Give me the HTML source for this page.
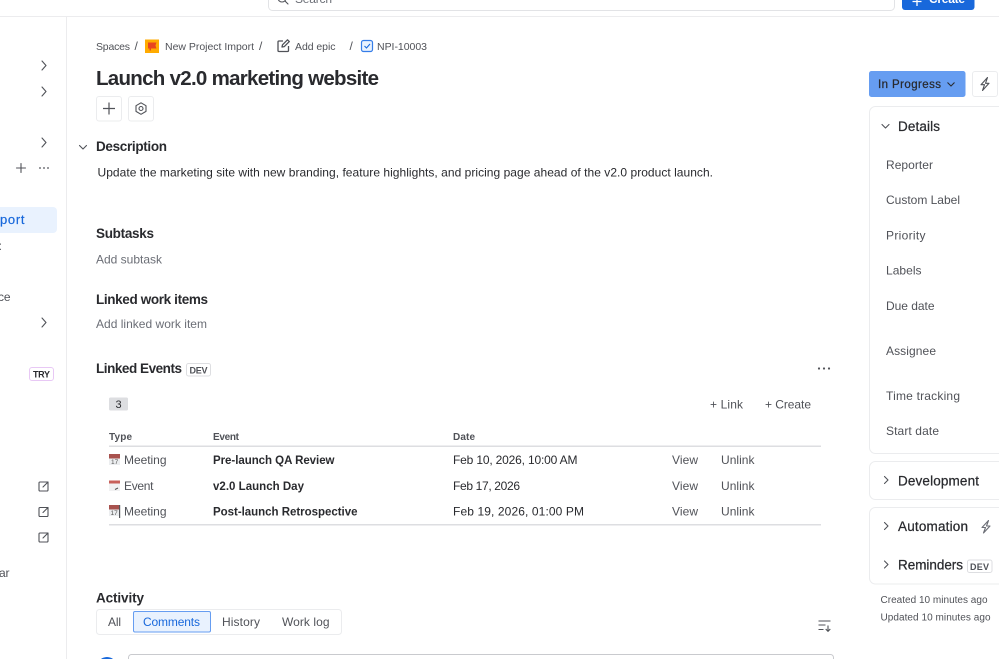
<!DOCTYPE html>
<html><head><meta charset="utf-8"><title>Launch v2.0 marketing website</title>
<style>
html,body{margin:0;padding:0;background:#fff;width:999px;height:659px;overflow:hidden}
svg{display:block;font-family:"Liberation Sans",sans-serif;filter:blur(.3px)}
.b{font-weight:700}
.m{stroke:#292a2e;stroke-width:.25}
.ic{fill:none;stroke:#505258;stroke-width:1.1;stroke-linecap:round;stroke-linejoin:round}
</style></head><body>
<svg width="999" height="659" viewBox="0 0 999 659" xmlns="http://www.w3.org/2000/svg">
<!-- top bar -->
<rect x="0" y="16" width="999" height="1" fill="#ececee"/>
<rect x="268.500" y="-10" width="626" height="20.500" rx="4" fill="#fff" stroke="#e2e3e6"/>
<circle cx="282" cy="-2" r="4" class="ic"/><path d="M285 1l3 3" class="ic"/>
<text x="295" y="3" font-size="12" fill="#6b6e76" textLength="37">Search</text>
<rect x="902" y="-10" width="72.500" height="20" rx="3" fill="#1868db"/>
<path d="M917 -3v9M912.500 1.500h9" stroke="#fff" stroke-width="1.300" fill="none"/>
<text x="929" y="3" font-size="12" fill="#fff" class="b" textLength="36">Create</text>

<!-- sidebar -->
<rect x="66" y="17" width="1" height="642" fill="#ececee"/>
<path d="M42 61l4 4.500-4 4.500M42 87l4 4.500-4 4.500M42 138l4 4.500-4 4.500M42 318l4 4.500-4 4.500" class="ic"/>
<path d="M21 163.500v9M16.500 168h9" class="ic"/>
<circle cx="40" cy="168" r=".9" fill="#505258"/><circle cx="44" cy="168" r=".9" fill="#505258"/><circle cx="48" cy="168" r=".9" fill="#505258"/>
<rect x="-8" y="207" width="65" height="26" rx="4" fill="#e9f2fe"/>
<text x="0" y="224" font-size="13" fill="#1868db" stroke="#1868db" stroke-width=".2" textLength="24.500">port</text>
<text x="-3" y="250" font-size="12" fill="#505258" textLength="5">t:</text>
<text x="-2" y="301" font-size="12" fill="#505258" textLength="12.500">ce</text>
<rect x="29.500" y="367.500" width="24" height="13" rx="2.500" fill="#fff" stroke="#e8c8f5"/>
<text x="33" y="377.500" font-size="9" fill="#292a2e" class="b" textLength="17">TRY</text>
<path d="M44 482h-4a1 1 0 0 0-1 1v7a1 1 0 0 0 1 1h7a1 1 0 0 0 1-1v-4M43 487l5-5M44.500 482h3.500v3.500" class="ic"/>
<path d="M44 507.500h-4a1 1 0 0 0-1 1v7a1 1 0 0 0 1 1h7a1 1 0 0 0 1-1v-4M43 512.500l5-5M44.500 507.500h3.500v3.500" class="ic"/>
<path d="M44 533h-4a1 1 0 0 0-1 1v7a1 1 0 0 0 1 1h7a1 1 0 0 0 1-1v-4M43 538l5-5M44.500 533h3.500v3.500" class="ic"/>
<text x="-1" y="577" font-size="12" fill="#505258" textLength="10.500">ar</text>

<!-- breadcrumbs -->
<g font-size="10.500" fill="#505258">
<text x="96" y="50" textLength="34">Spaces</text>
<text x="134.500" y="50" font-size="12">/</text>
<rect x="145" y="39.500" width="14" height="13.500" fill="#ffab00"/>
<path d="M148 42.500h8.500l-1 3 1 3H151v2h-1.500v-2H148z" fill="#e8451f"/>
<text x="165" y="50" textLength="89">New Project Import</text>
<text x="259" y="50" font-size="12">/</text>
<path d="M283 41h-4a1 1 0 0 0-1 1v8.500a1 1 0 0 0 1 1h8.500a1 1 0 0 0 1-1v-4.500M282 47l.5-2.200 5-5 1.800 1.800-5 5z" fill="none" stroke="#505258" stroke-width="1.300" stroke-linejoin="round"/>
<text x="295" y="50" textLength="40.500">Add epic</text>
<text x="349.500" y="50" font-size="12">/</text>
<rect x="361.500" y="40.500" width="11" height="11" rx="2" fill="#e9f2fe" stroke="#357de8" stroke-width="1.200"/>
<path d="M364.500 46l2 2 3.500-4" fill="none" stroke="#1868db" stroke-width="1.100"/>
<text x="377" y="50" textLength="50">NPI-10003</text>
</g>

<!-- title -->
<text x="96" y="85" font-size="20.500" class="b" fill="#292a2e" textLength="283">Launch v2.0 marketing website</text>
<rect x="96.500" y="96.500" width="25" height="24.500" rx="2.500" fill="#fff" stroke="#ebecee"/>
<path d="M109 102.500v12M103 108.500h12" fill="none" stroke="#505258" stroke-width="1.200"/>
<rect x="128.500" y="96.500" width="25" height="24.500" rx="2.500" fill="#fff" stroke="#ebecee"/>
<path d="M141 102.800l5 2.900v5.700l-5 2.900-5-2.900v-5.700z" class="ic"/><circle cx="141" cy="108.500" r="2" class="ic"/>

<!-- description -->
<path d="M79.500 145.500l3.500 3.500 3.500-3.500" class="ic"/>
<text x="96" y="151" font-size="13.500" class="b" fill="#292a2e" textLength="71">Description</text>
<text x="97.500" y="176.500" font-size="12" fill="#292a2e" textLength="615.500">Update the marketing site with new branding, feature highlights, and pricing page ahead of the v2.0 product launch.</text>

<text x="96" y="238" font-size="13.500" class="b" fill="#292a2e" textLength="58">Subtasks</text>
<text x="96" y="263.500" font-size="12" fill="#6b6e76" textLength="66">Add subtask</text>
<text x="96" y="304" font-size="13.500" class="b" fill="#292a2e" textLength="112">Linked work items</text>
<text x="96" y="328" font-size="12" fill="#6b6e76" textLength="111">Add linked work item</text>

<!-- linked events -->
<text x="96" y="373" font-size="13.500" class="b" fill="#292a2e" textLength="86">Linked Events</text>
<rect x="186.500" y="363.500" width="24" height="12.500" rx="2" fill="#fff" stroke="#dddee1"/>
<text x="189.500" y="373.500" font-size="9" class="b" fill="#505258" textLength="18">DEV</text>
<circle cx="819" cy="368.500" r="1.100" fill="#505258"/><circle cx="824" cy="368.500" r="1.100" fill="#505258"/><circle cx="829" cy="368.500" r="1.100" fill="#505258"/>
<rect x="109" y="397.500" width="19" height="13" rx="1.500" fill="#dddee1"/>
<text x="115.500" y="408" font-size="11" fill="#292a2e">3</text>
<text x="710" y="408.500" font-size="12" fill="#505258" textLength="33">+ Link</text>
<text x="765" y="408.500" font-size="12" fill="#505258" textLength="46">+ Create</text>

<g font-size="10" class="b" fill="#505258">
<text x="109" y="440" textLength="23">Type</text>
<text x="213" y="440" textLength="26">Event</text>
<text x="453" y="440" textLength="22">Date</text>
</g>
<rect x="109" y="445.500" width="712" height="1.500" fill="#dddee1"/>
<rect x="109" y="524" width="712" height="1.500" fill="#dddee1"/>

<!-- emoji-like calendars -->
<g>
<rect x="109" y="454" width="11" height="11" fill="#eceef0"/><rect x="109" y="454" width="11" height="4.500" fill="#a8524e"/>
<text x="111" y="464" font-size="6.500" fill="#555">17</text>
<rect x="109" y="480.500" width="11" height="10.500" fill="#f1f1f2"/><rect x="109" y="480.500" width="11" height="3" fill="#c8605a"/>
<path d="M115 489.500l3-1.500" stroke="#555" stroke-width="1"/>
<rect x="109" y="505" width="10" height="11" fill="#eceef0"/><rect x="109" y="505" width="10" height="4.500" fill="#a8524e"/>
<text x="110.500" y="515" font-size="6.500" fill="#555">17</text>
<rect x="119" y="505" width="1.200" height="13" fill="#55575c"/>
</g>

<g font-size="12" fill="#292a2e">
<text x="124" y="464" fill="#505258" textLength="42.500">Meeting</text>
<text x="124" y="490" fill="#505258" textLength="29.500">Event</text>
<text x="124" y="515.500" fill="#505258" textLength="42.500">Meeting</text>
<g font-size="11.500" class="b">
<text x="213" y="464" textLength="121.500">Pre-launch QA Review</text>
<text x="213" y="490" textLength="91">v2.0 Launch Day</text>
<text x="213" y="515.500" textLength="144.500">Post-launch Retrospective</text>
</g>
<text x="453" y="464" textLength="124.500">Feb 10, 2026, 10:00 AM</text>
<text x="453" y="490" textLength="67">Feb 17, 2026</text>
<text x="453" y="515.500" textLength="131">Feb 19, 2026, 01:00 PM</text>
<g fill="#505258">
<text x="672" y="464" textLength="26">View</text><text x="721" y="464" textLength="33.500">Unlink</text>
<text x="672" y="490" textLength="26">View</text><text x="721" y="490" textLength="33.500">Unlink</text>
<text x="672" y="515.500" textLength="26">View</text><text x="721" y="515.500" textLength="33.500">Unlink</text>
</g></g>

<!-- activity -->
<text x="96" y="602.500" font-size="13.500" class="b" fill="#292a2e" textLength="48">Activity</text>
<rect x="96.500" y="609.500" width="245" height="25" rx="3" fill="#fff" stroke="#ebecee"/>
<rect x="133.500" y="611.500" width="77" height="20.500" rx="1.500" fill="#e9f2fe" stroke="#669df1"/>
<g font-size="12">
<text x="108" y="626" fill="#505258" textLength="13">All</text>
<text x="143" y="626" fill="#1868db" textLength="57">Comments</text>
<text x="222" y="626" fill="#505258" textLength="38">History</text>
<text x="282" y="626" fill="#505258" textLength="47.500">Work log</text>
</g>
<path d="M818.500 621h12M818.500 625h7M818.500 629.500h5M828 625.500v5.500M825.700 629l2.300 2.300 2.300-2.300" fill="none" stroke="#505258" stroke-width="1.100"/>
<circle cx="107" cy="667" r="10" fill="#1868db"/>
<rect x="128.500" y="654.500" width="705" height="20" rx="3" fill="#fff" stroke="#c9cace"/>

<!-- right column -->
<rect x="869" y="71" width="96.500" height="26" rx="2.500" fill="#669df1"/>
<text x="878" y="88" font-size="11.500" class="m" fill="#292a2e" textLength="63">In Progress</text>
<path d="M947.500 82.500l3.500 3.500 3.500-3.500" fill="none" stroke="#292a2e" stroke-width="1.100"/>
<rect x="972.500" y="71.500" width="25" height="25" rx="2.500" fill="#fff" stroke="#ebecee"/>
<path d="M987.500 77.500L981 84.700h3.500L982.500 90.500 989 83.300h-3.500z" fill="none" stroke="#505258" stroke-width="1.100" stroke-linejoin="round"/>

<rect x="869.500" y="106.500" width="145" height="347" rx="6" fill="#fff" stroke="#ebecee"/>
<path d="M882 124.500l3.500 3.500 3.500-3.500" class="ic"/>
<text x="898" y="131" font-size="13.500" class="m" fill="#292a2e" textLength="42">Details</text>
<g font-size="12" fill="#505258">
<text x="886" y="169" textLength="47">Reporter</text>
<text x="886" y="204" textLength="74">Custom Label</text>
<text x="886" y="239.500" textLength="39.500">Priority</text>
<text x="886" y="274.500" textLength="35.500">Labels</text>
<text x="886" y="310" textLength="48.500">Due date</text>
<text x="886" y="355" textLength="50">Assignee</text>
<text x="886" y="400" textLength="74">Time tracking</text>
<text x="886" y="435" textLength="53">Start date</text>
</g>
<rect x="869.500" y="461.500" width="145" height="38" rx="6" fill="#fff" stroke="#ebecee"/>
<path d="M884.500 476.500l3.500 3.500-3.500 3.500" class="ic"/>
<text x="898" y="485.500" font-size="13.500" class="m" fill="#292a2e" textLength="81">Development</text>
<rect x="869.500" y="507.500" width="145" height="76.500" rx="6" fill="#fff" stroke="#ebecee"/>
<path d="M884.500 522.500l3.500 3.500-3.500 3.500" class="ic"/>
<text x="898" y="531" font-size="13.500" class="m" fill="#292a2e" textLength="70">Automation</text>
<path d="M988.500 520.500L982 527.500h3.500L983.500 533 990 526h-3.500z" fill="none" stroke="#6b6e76" stroke-width="1.100" stroke-linejoin="round"/>
<path d="M884.500 561l3.500 3.500-3.500 3.500" class="ic"/>
<text x="898" y="569.500" font-size="13.500" class="m" fill="#292a2e" textLength="65">Reminders</text>
<rect x="967.500" y="560" width="24.500" height="12.500" rx="2" fill="#fff" stroke="#dddee1"/>
<text x="970" y="570" font-size="9" class="b" fill="#505258" textLength="19">DEV</text>
<text x="880.500" y="603" font-size="10" fill="#505258" textLength="107">Created 10 minutes ago</text>
<text x="880.500" y="620.500" font-size="10" fill="#505258" textLength="110">Updated 10 minutes ago</text>
</svg>
</body></html>
